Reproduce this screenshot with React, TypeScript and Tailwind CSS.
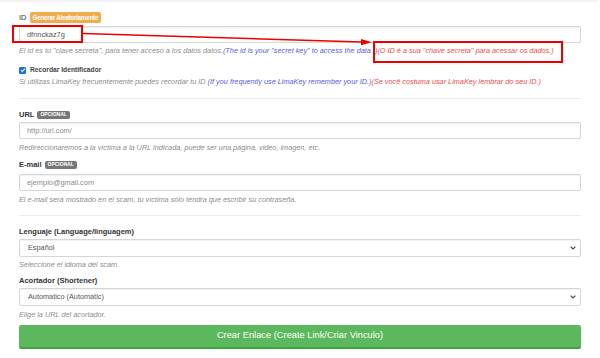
import React from 'react';

const Badge = ({ text, tone }: { text: string; tone: 'orange' | 'gray' }) => (
  <span
    className={`inline-flex items-center rounded-[2px] font-bold text-white ${
      tone === 'orange'
        ? 'bg-[#f0ad4e] h-[11px] px-[3px] text-[6.3px] tracking-[-0.25px]'
        : 'bg-[#777777] h-[8px] px-[3px] text-[5px] uppercase'
    }`}
  >
    {text}
  </span>
);

const Help = ({ children, className = '' }: { children: React.ReactNode; className?: string }) => (
  <p className={`h-[10px] leading-[10px] text-[7.3px] italic text-[#8c8c8c] whitespace-nowrap ${className}`}>{children}</p>
);

const Label = ({ children, className = '' }: { children: React.ReactNode; className?: string }) => (
  <div className={`flex items-center gap-[3px] h-[10px] text-[7.5px] font-bold text-[#333333] ${className}`}>{children}</div>
);

const Field = ({ value, placeholder, className = '' }: { value?: string; placeholder?: string; className?: string }) => (
  <input
    readOnly
    defaultValue={value}
    placeholder={placeholder}
    className={`block w-full h-[17px] px-[7px] text-[7.4px] text-[#555555] placeholder:text-[#8a8a8a] bg-white border border-[#d6d6d6] rounded-[2px] shadow-[inset_0_1px_1px_rgba(0,0,0,0.06)] outline-none ${className}`}
  />
);

const SelectBox = ({ value, className = '' }: { value: string; className?: string }) => (
  <div className={`relative ${className}`}>
    <select
      defaultValue={value}
      className="block w-full h-[18px] pl-[8px] text-[7.3px] text-[#555555] bg-white border border-[#d6d6d6] rounded-[2px] shadow-[inset_0_1px_1px_rgba(0,0,0,0.06)] outline-none appearance-none"
    >
      <option>{value}</option>
    </select>
    <svg className="absolute right-[5px] top-[7px] w-[6px] h-[4px]" viewBox="0 0 6 4">
      <path d="M0.6 0.6 L3 3 L5.4 0.6" fill="none" stroke="#444" strokeWidth="1.1" />
    </svg>
  </div>
);

export default function App() {
  return (
    <div className="relative w-[600px] h-[358px] overflow-hidden bg-white font-['Liberation_Sans',Arial,sans-serif]">
      <div className="h-[2px] w-[597px] bg-[#f3f3f3]" />

      <div className="px-[19px]">
        <Label className="mt-[10px] h-[11px] font-normal text-[#333]">
          ID <Badge text="Generar Aleatoriamente" tone="orange" />
        </Label>
        <Field value="dfnnckaz7g" className="mt-[3px]" />
        <Help className="mt-[3px]">
          El id es tu "clave secreta", para tener acceso a los datos datos.
          <span className="text-[#5a5ae6]">(The id is your "secret key" to access the data .)</span>
          <span className="text-[#ee4b4b]">(O ID é a sua "chave secreta" para acessar os dados.)</span>
        </Help>

        <div className="mt-[9px] flex items-center gap-[4px] h-[10px]">
          <span className="flex items-center justify-center w-[7px] h-[7px] rounded-[1px] bg-[#1a73e8]">
            <svg viewBox="0 0 8 8" className="w-[6px] h-[6px]">
              <path d="M1.3 4.2 L3.2 6 L6.7 2" fill="none" stroke="#fff" strokeWidth="1.4" />
            </svg>
          </span>
          <span className="text-[6.7px] font-bold text-[#444]">Recordar Identificador</span>
        </div>
        <Help className="mt-[2px]">
          Si utilizas LimaKey frecuentemente puedes recordar tu ID{' '}
          <span className="text-[#5a5ae6]">(If you frequently use LimaKey remember your ID.)</span>
          <span className="text-[#ee4b4b]">(Se você costuma usar LimaKey lembrar do seu ID.)</span>
        </Help>

        <div className="mt-[11px] border-t border-[#ececec]" />

        <Label className="mt-[11px]">
          URL <Badge text="Opcional" tone="gray" />
        </Label>
        <Field placeholder="http://url.com/" className="mt-[2px]" />
        <Help className="mt-[4px]">
          Redireccionaremos a la víctima a la URL indicada, puede ser una página, video, imagen, etc.
        </Help>

        <Label className="mt-[7px]">
          E-mail <Badge text="Opcional" tone="gray" />
        </Label>
        <Field placeholder="ejemplo@gmail.com" className="mt-[4px]" />
        <Help className="mt-[4px]">
          El e-mail será mostrado en el scam, tu víctima sólo tendra que escribir su contraseña.
        </Help>

        <div className="mt-[10px] border-t border-[#ececec]" />

        <Label className="mt-[11px]">Lenguaje (Language/linguagem)</Label>
        <SelectBox value="Español" className="mt-[2px]" />
        <Help className="mt-[3px]">Seleccione el idioma del scam.</Help>

        <Label className="mt-[6px]">Acortador (Shortener)</Label>
        <SelectBox value="Automatico (Automatic)" className="mt-[2px]" />
        <Help className="mt-[4px]">Elige la URL del acortador.</Help>

        <button className="mt-[5px] w-full h-[24px] rounded-[2px] bg-[#5cb85c] border-b-[2px] border-[#3fa53f] text-white text-[9.3px]">
          Crear Enlace (Create Link/Criar Vinculo)
        </button>
      </div>

      {/* annotation overlay */}
      <div className="absolute left-[12px] top-[25px] w-[71px] h-[18px] border-[2px] border-[#ee0000]" />
      <div className="absolute left-[373px] top-[41px] w-[190px] h-[22px] border-[2px] border-[#ee0000]" />
      <svg className="absolute left-0 top-0 w-[600px] h-[358px] pointer-events-none" viewBox="0 0 600 358">
        <line x1="83" y1="33.5" x2="362" y2="42" stroke="#ee0000" strokeWidth="1.6" />
        <path d="M372 42.3 L361 39 L361 45.3 Z" fill="#ee0000" />
      </svg>
    </div>
  );
}
